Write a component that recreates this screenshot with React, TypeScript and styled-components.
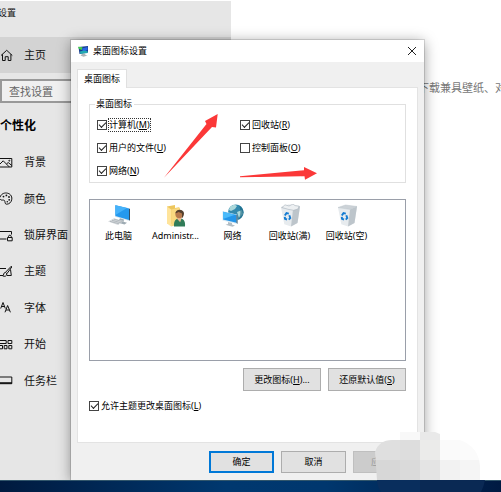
import React from "react";
import styled, { createGlobalStyle } from "styled-components";

const Global = createGlobalStyle`
  * { box-sizing: border-box; }
  body { margin: 0; background: #fff; color: #111; overflow: hidden;
    font-family: "Noto Sans", "Noto Sans CJK SC", sans-serif; }
  button, input { font: inherit; color: inherit; margin: 0; }
`;

const Desktop = styled.div`
  position: relative;
  display: flex;
  flex-direction: column;
  min-height: 100vh;
  overflow: hidden;
  padding-top: 1px;
`;
const SettingsWindow = styled.div`
  flex: 1;
  display: flex;
`;
const Sidebar = styled.aside`
  width: 231px;
  flex: none;
  background: #e6e6e6;
  font-size: 11px;
  line-height: 16px;
`;
const WindowTitle = styled.div`
  height: 36px;
  padding-top: 4px;
  margin-left: -2px;
  font-size: 9px;
`;
const NavLink = styled.a<{ $current?: boolean }>`
  display: flex;
  align-items: center;
  gap: 11px;
  height: ${(p) => (p.$current ? "36px" : "auto")};
  background: ${(p) => (p.$current ? "#d3d3d3" : "transparent")};
  color: #111;
  text-decoration: none;
  svg { display: block; width: 13px; height: 13px; flex: none; }
`;
const SearchBox = styled.input`
  display: block;
  width: 220px;
  height: 24px;
  margin-top: 6px;
  padding: 0 7px;
  border: 2px solid #999;
  border-radius: 0;
  background: #f0f0f0;
  &::placeholder { color: #666; opacity: 1; }
`;
const SectionTitle = styled.h2`
  margin: 15px 0 10px;
  font-size: 12px;
  line-height: 16px;
  font-weight: 700;
  color: #000;
`;
const NavList = styled.nav`
  display: grid;
  grid-auto-rows: 1fr;
  height: 255px;
`;
const Content = styled.main`
  flex: 1;
  min-width: 0;
  padding: 79px 0 0 187px;
  overflow: hidden;
  background: #fff;
  color: #777;
  font-size: 11px;
  line-height: 16px;
  white-space: nowrap;
`;
const Taskbar = styled.div`
  height: 12px;
  border-top: 1px solid #31566b;
  background: linear-gradient(90deg, #001a3f 0%, #00386f 45%, #00376e 65%, #001a42 100%);
`;

const Dialog = styled.section`
  position: absolute;
  left: 71px;
  top: 40px;
  width: 353px;
  background: #f0f0f0;
  box-shadow: 0 0 0 1px rgba(0, 0, 0, 0.12), 0 2px 13px rgba(0, 0, 0, 0.4);
  clip-path: inset(-20px -20px 0 -20px);
  font-size: 9px;
  line-height: 12px;
  color: #000;
`;
const TitleBar = styled.header`
  display: flex;
  align-items: center;
  height: 22px;
  padding: 0 6px;
  gap: 4px;
  background: #fff;
  svg { display: block; }
`;
const DialogTitle = styled.h1`
  flex: 1;
  margin: 0;
  font: inherit;
`;
const CloseButton = styled.button`
  width: 12px;
  height: 12px;
  padding: 1px;
  border: 0;
  background: none;
`;
const DialogBody = styled.div`
  padding: 7px 6px 0;
`;
const Tab = styled.button`
  position: relative;
  display: block;
  height: 19px;
  padding: 0 6px;
  margin-bottom: -1px;
  border: 1px solid #e0e0e0;
  border-bottom: 0;
  border-radius: 0;
  background: #fff;
`;
const TabPanel = styled.div`
  padding: 10px 11px 30px;
  border: 1px solid #e3e3e3;
  background: #fff;
`;
const Group = styled.fieldset`
  display: grid;
  grid-template-columns: 143px 1fr;
  grid-auto-rows: 23px;
  align-items: center;
  min-width: 0;
  margin: 0;
  padding: 3px 7px 0;
  border: 1px solid #e0e0e0;
  legend { padding: 0 2px 0 1px; margin-left: -2px; }
`;
const CheckLabel = styled.label`
  display: flex;
  align-items: center;
  gap: 2px;
  white-space: nowrap;
`;
const CheckBox = styled.input`
  appearance: none;
  display: grid;
  place-items: center;
  width: 10px;
  height: 10px;
  border: 1px solid #444;
  background: #fff;
  &:checked::before {
    content: "";
    width: 6px;
    height: 3px;
    margin-bottom: 2px;
    border: solid #222;
    border-width: 0 0 1px 1px;
    transform: rotate(-45deg);
  }
`;
const CheckText = styled.span<{ $focused?: boolean }>`
  outline: ${(p) => (p.$focused ? "1px dotted #333" : "none")};
`;
const IconList = styled.ul`
  display: flex;
  height: 162px;
  margin: 16px 0 0;
  padding: 4px 0 0;
  border: 1px solid #9a9fa9;
  list-style: none;
`;
const IconItem = styled.li`
  display: flex;
  flex-direction: column;
  align-items: center;
  gap: 3px;
  width: 57px;
  white-space: nowrap;
  svg { display: block; width: 24px; height: 23px; }
`;
const ButtonRow = styled.div`
  display: flex;
  justify-content: flex-end;
  gap: 7px;
  margin: 7px 0 9px;
`;
const FooterRow = styled(ButtonRow)`
  margin: 0;
  padding: 8px 0 7px;
`;
const PushButton = styled.button<{ $wide?: boolean; $primary?: boolean }>`
  width: ${(p) => (p.$wide ? "78px" : "65px")};
  height: ${(p) => (p.$wide ? "23px" : "22px")};
  padding: 0;
  border: ${(p) => (p.$primary ? "2px solid #0078d7" : "1px solid #adadad")};
  border-radius: 0;
  background: #e1e1e1;
  &:disabled { background: #ccc; border-color: #bfbfbf; color: #999; }
`;
const Annotations = styled.svg`
  position: absolute;
  left: 164px;
  top: 112px;
  pointer-events: none;
`;
const Mosaic = styled.svg`
  position: absolute;
  left: 375px;
  top: 432px;
`;

const Line = ({ children }: { children: React.ReactNode }) => (
  <svg viewBox="0 0 13 13" fill="none" stroke="#111" strokeWidth="1" aria-hidden="true">
    {children}
  </svg>
);
const HomeIcon = () => (
  <Line><path d="M1 6.5 6.7 1.3 12.3 6.5M2.5 5.3V11.5H5.2V7.7H8.2V11.5H10.9V5.3" /></Line>
);
const PictureIcon = () => (
  <Line><path d="M-.5 2.5H11.8V11H-.5ZM0 8 3.2 4.8 9.4 11M6.5 8 8.2 6.5 11.8 9.5" /><circle cx="9.3" cy="4.7" r=".5" /></Line>
);
const PaletteIcon = () => (
  <Line>
    <path d="M0 5.3C1.2 1.8 4 .8 6.5 1 10 1.3 12.2 4 11.8 7.2 11.5 10.3 9 12.3 6.5 12.2 4.5 12 5.5 9.8 4.5 8.6 3.4 7.3 1.2 9 .2 7.2" />
    <g fill="#111" stroke="none"><circle cx="3.5" cy="4.6" r=".9" /><circle cx="6.4" cy="3.4" r=".9" /><circle cx="9" cy="5" r=".9" /><circle cx="9.2" cy="7.8" r=".9" /><circle cx="7.3" cy="9.8" r=".8" /></g>
  </Line>
);
const LockIcon = () => (
  <Line><path d="M6.5 10H-.5V2.5H11.5V5.5M7.5 8.5H12.2V11.8H7.5ZM8.5 8.5V7.3C8.5 5.8 11.2 5.8 11.2 7.3V8.5" /></Line>
);
const ThemeIcon = () => (
  <Line><path d="M6 3.5H-.5V10.5H3.2M10.5 4.5 11.3 10.5H7M11.3 1.2 5.5 7.3 6.8 8.8 11.8 2ZM5.4 7.5C3.2 7.5 4.2 10 2.6 10.8 4.8 12 6.8 11 6.8 9" /></Line>
);
const FontIcon = () => (
  <Line><path d="M.7 7.5 3 1.5 5.3 7.5M1.5 5.5H4.5M5 11.3 7.6 4.5 10.4 11.3M6 9H9.5" /></Line>
);
const StartIcon = () => (
  <Line><path d="M-.5 2.5H6.2V5.5H-.5ZM8 2.5H11.8V5.5H8ZM-.5 7.5H2.5V10.8H-.5ZM4.2 7.5H7V10.8H4.2ZM8.8 7.5H11.8V10.8H8.8Z" /></Line>
);
const TaskbarIcon = () => (
  <Line><path d="M-.5 3H11.8V9.7H-.5Z" /><path d="M0 9H12" strokeWidth="1.6" /></Line>
);

const Monitor = () => (
  <svg viewBox="0 0 24 23" aria-hidden="true">
    <path d="M8 1 22.5 4.2V17L8 12.8Z" fill="#d8e5ee" />
    <path d="M8.4 1.3 22 4.6V16L8.4 12Z" fill="#2499ee" />
    <path d="M8.4 1.3 20 4.1 8.4 11Z" fill="#45b2fa" />
    <path d="M22 4.6 23 4.9V16.8L22 16Z" fill="#315067" />
    <path d="m13 14.3 4 1.1-.5 2.3 3.5 1-2.5 1.8-7-2Z" fill="#9eabb3" />
    <path d="m1 17.4 6-3.1 9.5 2.8-5.5 4Z" fill="#d6dadd" />
    <path d="m3 17.4 9 2.4M5 16.3l9 2.5M7 15.2l8.5 2.4" stroke="#9aa2a9" strokeWidth=".6" />
  </svg>
);
const UserFolder = () => (
  <svg viewBox="0 0 24 23" aria-hidden="true">
    <path d="M3 2.5 11 1V4L15 3.2V21L3 19.5Z" fill="#edc65d" />
    <path d="M3 2.5 7.2 5.5V22.5L3 19.5Z" fill="#ffe49b" />
    <path d="M7.2 5.5 16 3.5V20L7.2 22.5Z" fill="#f9d980" />
    <path d="M10 22.5C9.5 17 12 14.3 15.4 14.3 19.4 14.3 21.5 17 21 22.5Z" fill="#317c58" />
    <path d="m13.2 15 3 3.3 1.2-3.7-.2-2h-3.4Z" fill="#edba92" />
    <circle cx="15.4" cy="10.2" r="4" fill="#b77a4d" />
    <path d="M11.4 9.5C11.2 4.6 19.7 4.2 20 9.3 19.8 12 18.8 13.5 18 14V9.4L14.7 8Z" fill="#54402e" />
  </svg>
);
const NetworkIcon = () => (
  <svg viewBox="0 0 24 23" aria-hidden="true">
    <circle cx="14.8" cy="8.3" r="7.8" fill="#3389ad" />
    <path d="M9 3C12 0 15 1 16 2L14 5 10 7 8 6ZM16 8 21 6 22 10 18 14Z" fill="#abd8da" />
    <path d="M18 1.4C21 3 22.5 5.5 22.5 8 22.5 12 20 15 17 16 20 11 20 6 18 1.4Z" fill="#17647f" opacity=".6" />
    <path d="M1.5 7 16.5 10.8V20L1.5 16.5Z" fill="#d7eaf5" />
    <path d="M2 7.7 15.5 11V18.7L2 15.6Z" fill="#2395e9" />
    <path d="M2 7.7 14 10.7 2 15Z" fill="#4abafa" />
    <path d="m15.5 11 1-.2V20l-1-1.3Z" fill="#315067" />
    <path d="m7 18 4 1v1.5l3 1-2.5 1.2-7-2L7 20Z" fill="#b3bec5" />
  </svg>
);
const RecycleBin = ({ full }: { full?: boolean }) => (
  <svg viewBox="0 0 24 23" aria-hidden="true">
    <path d="M3 3.5 15 5.4 22 2.5 19.5 19 13 22.5 6.3 20.3Z" fill="#e7ebee" />
    <path d="M15 5.4 22 2.5 19.5 19 13 22.5Z" fill="#bdc5cb" />
    <path d="M3 3.5 10.5 1 22 2.5 15 5.4Z" fill={full ? "#f8fafb" : "#ccd2d7"} stroke="#bbc4ca" strokeWidth=".5" />
    {full && <path d="M4 3.5 7 .8 11 2 15 0 17 1.6 21 2.2 20 5 15.6 6.3 10 5.3Z" fill="#edf0f2" stroke="#a9b4bd" strokeWidth=".6" />}
    <g fill="none" stroke="#137bd2" strokeWidth="1.9">
      <path d="m6.8 11.5 1.7-2.4 2.3.5" />
      <path d="m11.3 11.2 1 2.9-1.6 1.5" />
      <path d="m9 15.5-2-.7-.2-2" />
    </g>
  </svg>
);
const DialogIcon = () => (
  <svg width="12" height="12" viewBox="0 0 12 12" aria-hidden="true">
    <path d="M1.5 2 11 1V7.5L2.5 9Z" fill="#183d8f" />
    <path d="M1 1.7 5.5 2.3 4.8 5 2 4Z" fill="#45cf48" />
    <path d="M5 3.5 10.5 2V5L6 7Z" fill="#2867e8" />
    <path d="m2.8 6.5 4-1 3.8.8v1.8l-7 1Z" fill="#23aab2" />
    <path d="m5 9 3-.5.5 1.4 2 .5-4 1.3L3.5 10.5Z" fill="#adb4b8" />
  </svg>
);

const navItems = [
  { text: "背景", Icon: PictureIcon },
  { text: "颜色", Icon: PaletteIcon },
  { text: "锁屏界面", Icon: LockIcon },
  { text: "主题", Icon: ThemeIcon },
  { text: "字体", Icon: FontIcon },
  { text: "开始", Icon: StartIcon },
  { text: "任务栏", Icon: TaskbarIcon },
];
const checks = [
  { text: "计算机", hotkey: "M", checked: true, focused: true },
  { text: "回收站", hotkey: "R", checked: true },
  { text: "用户的文件", hotkey: "U", checked: true },
  { text: "控制面板", hotkey: "O", checked: false },
  { text: "网络", hotkey: "N", checked: true },
];
const desktopIcons = [
  { text: "此电脑", icon: <Monitor /> },
  { text: "Administr...", icon: <UserFolder /> },
  { text: "网络", icon: <NetworkIcon /> },
  { text: "回收站(满)", icon: <RecycleBin full /> },
  { text: "回收站(空)", icon: <RecycleBin /> },
];

type CheckProps = { text: string; hotkey: string; checked: boolean; focused?: boolean };
const Check = ({ text, hotkey, checked, focused }: CheckProps) => (
  <CheckLabel>
    <CheckBox type="checkbox" defaultChecked={checked} />
    <CheckText $focused={focused}>{text}(<u>{hotkey}</u>)</CheckText>
  </CheckLabel>
);

export default function App() {
  return (
    <Desktop>
      <Global />
      <SettingsWindow>
        <Sidebar>
          <WindowTitle>设置</WindowTitle>
          <NavLink href="#home" $current><HomeIcon />主页</NavLink>
          <SearchBox type="text" placeholder="查找设置" aria-label="查找设置" />
          <SectionTitle>个性化</SectionTitle>
          <NavList>
            {navItems.map(({ text, Icon }) => (
              <NavLink href="#" key={text}><Icon />{text}</NavLink>
            ))}
          </NavList>
        </Sidebar>
        <Content>下载兼具壁纸、对</Content>
      </SettingsWindow>
      <Taskbar />

      <Dialog role="dialog" aria-labelledby="dialog-title">
        <TitleBar>
          <DialogIcon />
          <DialogTitle id="dialog-title">桌面图标设置</DialogTitle>
          <CloseButton aria-label="关闭">
            <svg width="10" height="10" viewBox="0 0 10 10" stroke="#222" strokeWidth="1" aria-hidden="true">
              <path d="m1 1 8 8M9 1 1 9" />
            </svg>
          </CloseButton>
        </TitleBar>
        <DialogBody>
          <Tab role="tab" aria-selected="true">桌面图标</Tab>
          <TabPanel role="tabpanel">
            <Group>
              <legend>桌面图标</legend>
              {checks.map((c) => <Check key={c.hotkey} {...c} />)}
            </Group>
            <IconList>
              {desktopIcons.map(({ text, icon }) => (
                <IconItem key={text}>{icon}<span>{text}</span></IconItem>
              ))}
            </IconList>
            <ButtonRow>
              <PushButton $wide>更改图标(<u>H</u>)...</PushButton>
              <PushButton $wide>还原默认值(<u>S</u>)</PushButton>
            </ButtonRow>
            <Check text="允许主题更改桌面图标" hotkey="L" checked />
          </TabPanel>
          <FooterRow>
            <PushButton $primary>确定</PushButton>
            <PushButton>取消</PushButton>
            <PushButton disabled>应用(<u>A</u>)</PushButton>
          </FooterRow>
        </DialogBody>
      </Dialog>

      <Annotations width="154" height="70" viewBox="164 112 154 70" fill="#fb3838" aria-hidden="true">
        <path d="M164 177.7 206.5 124 205 121 217.7 114 216 127.5 212 127Z" />
        <path d="M240 176.3 304 170.3V167L317 173.2 305 179.8 304.5 176.3 240 177.3Z" />
      </Annotations>
      <Mosaic width="110" height="60" viewBox="375 432 110 60" aria-hidden="true">
        <clipPath id="mosaic-shape">
          <path d="M400 432H435L440 434V440H460Q479 447 480 466V480H485Q484 486 481 492H381Q377 486 377 480L375 452Q379 440 392 440H400Z" />
        </clipPath>
        <g clipPath="url(#mosaic-shape)">
          <path d="M400 432h20v8h-20z" fill="#f8f8f8" />
          <path d="M420 432h20v8h-20z" fill="#e9e9e9" />
          <path d="M375 440h25v20h-25z" fill="#dfdfdf" />
          <path d="M400 440h20v20h-20z" fill="#dddddd" />
          <path d="M420 440h20v20h-20z" fill="#ebebea" />
          <path d="M440 440h20v20h-20z" fill="#fafafa" />
          <path d="M460 440h20v20h-20z" fill="#fbfbfb" />
          <path d="M375 460h25v20h-25z" fill="#d7d7d7" />
          <path d="M400 460h20v20h-20z" fill="#dadada" />
          <path d="M420 460h20v20h-20z" fill="#e4e4e4" />
          <path d="M440 460h20v20h-20z" fill="#f2f2f2" />
          <path d="M460 460h20v20h-20z" fill="#f5f5f5" />
          <path d="M375 480h45v12h-45z" fill="#092e5d" />
          <path d="M420 480h65v12h-65z" fill="#0a2954" />
        </g>
      </Mosaic>
    </Desktop>
  );
}
